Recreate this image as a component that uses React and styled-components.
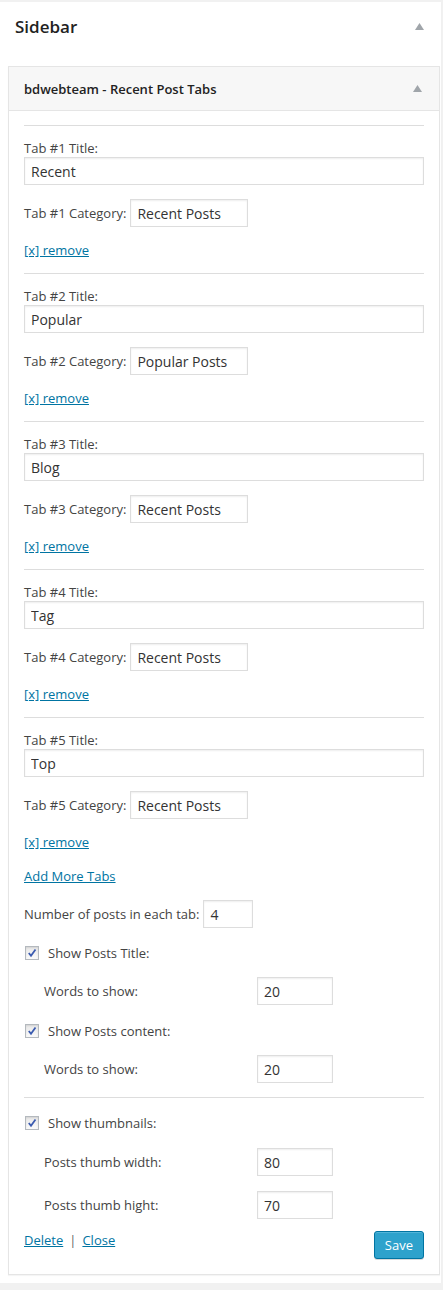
import React from 'react';
import styled, { createGlobalStyle } from 'styled-components';

const GlobalStyle = createGlobalStyle`
  html, body {
    margin: 0;
    padding: 0;
    background: #f1f1f1;
  }
  body {
    font-family: 'Open Sans', 'Noto Sans', sans-serif;
    font-size: 13px;
    color: #444;
  }
`;

const tabs = [
  { title: 'Recent', category: 'Recent Posts' },
  { title: 'Popular', category: 'Popular Posts' },
  { title: 'Blog', category: 'Recent Posts' },
  { title: 'Tag', category: 'Recent Posts' },
  { title: 'Top', category: 'Recent Posts' },
];

const Arrow = () => (
  <svg width="9" height="7" viewBox="0 0 9 7">
    <path d="M4.5 0 L9 7 L0 7 Z" fill="#a0a5aa" />
  </svg>
);

const CheckIcon = () => (
  <svg width="10" height="10" viewBox="0 0 10 10">
    <path d="M1.8 5 L4 7.8 L8.5 1.5" stroke="#3b5bb0" strokeWidth="1.8" fill="none" />
  </svg>
);

const App = () => {
  return (
    <>
      <GlobalStyle />
      <Panel>
        <PanelHeader>
          <PanelTitle>Sidebar</PanelTitle>
          <Arrow />
        </PanelHeader>
        <Widget>
          <WidgetHeader>
            <WidgetTitle>bdwebteam - Recent Post Tabs</WidgetTitle>
            <Arrow />
          </WidgetHeader>
          <WidgetBody>
            {tabs.map((tab, index) => (
              <TabSection key={index}>
                <Divider />
                <Label>Tab #{index + 1} Title:</Label>
                <TextInput $width="100%" defaultValue={tab.title} />
                <InlineRow>
                  <span>Tab #{index + 1} Category:</span>
                  <TextInput $width="118px" defaultValue={tab.category} />
                </InlineRow>
                <RemoveLink href="#">[x] remove</RemoveLink>
              </TabSection>
            ))}
            <AddLink href="#">Add More Tabs</AddLink>
            <InlineRow $top="15px">
              <span>Number of posts in each tab:</span>
              <TextInput $width="50px" defaultValue="4" />
            </InlineRow>
            <CheckRow $top="16px">
              <CheckBox><CheckIcon /></CheckBox>
              <span>Show Posts Title:</span>
            </CheckRow>
            <IndentRow>
              <span>Words to show:</span>
              <TextInput $width="76px" defaultValue="20" />
            </IndentRow>
            <CheckRow $top="17px">
              <CheckBox><CheckIcon /></CheckBox>
              <span>Show Posts content:</span>
            </CheckRow>
            <IndentRow>
              <span>Words to show:</span>
              <TextInput $width="76px" defaultValue="20" />
            </IndentRow>
            <Divider $top="14px" />
            <CheckRow $top="16px">
              <CheckBox><CheckIcon /></CheckBox>
              <span>Show thumbnails:</span>
            </CheckRow>
            <IndentRow $top="16px">
              <span>Posts thumb width:</span>
              <TextInput $width="76px" defaultValue="80" />
            </IndentRow>
            <IndentRow>
              <span>Posts thumb hight:</span>
              <TextInput $width="76px" defaultValue="70" />
            </IndentRow>
            <Footer>
              <FooterLinks>
                <TextLink href="#">Delete</TextLink>
                <Separator>|</Separator>
                <TextLink href="#">Close</TextLink>
              </FooterLinks>
              <SaveButton>Save</SaveButton>
            </Footer>
          </WidgetBody>
        </Widget>
      </Panel>
    </>
  );
};

const Panel = styled.div`
  width: 441px;
  margin-top: 2px;
  background: #fff;
  box-shadow: 0 1px 1px rgba(0, 0, 0, 0.04);
  padding: 0 1px 8px 8px;
  box-sizing: border-box;
`;

const PanelHeader = styled.div`
  height: 52px;
  display: flex;
  align-items: center;
  justify-content: space-between;
  padding: 0 16px 4px 7px;
  box-sizing: border-box;
`;

const PanelTitle = styled.h3`
  margin: 0;
  font-size: 17px;
  font-weight: 600;
  color: #222;
`;

const Widget = styled.div`
  margin-top: 12px;
  border: 1px solid #e5e5e5;
  background: #fff;
  box-shadow: 0 1px 1px rgba(0, 0, 0, 0.04);
`;

const WidgetHeader = styled.div`
  height: 43px;
  background: #f7f7f7;
  border-bottom: 1px solid #e5e5e5;
  display: flex;
  align-items: center;
  justify-content: space-between;
  padding: 0 17px 0 15px;
`;

const WidgetTitle = styled.h4`
  margin: 0;
  font-size: 13px;
  font-weight: 600;
  color: #222;
`;

const WidgetBody = styled.div`
  padding: 14px 15px 15px;
  display: flex;
  flex-direction: column;
`;

const TabSection = styled.div`
  display: flex;
  flex-direction: column;
  padding-bottom: 14px;
`;

const Divider = styled.div`
  height: 0;
  border-top: 1px solid #ddd;
  margin-top: ${({ $top }) => $top || '0'};
`;

const Label = styled.label`
  margin-top: 13px;
  line-height: 18px;
`;

const TextInput = styled.input`
  box-sizing: border-box;
  width: ${({ $width }) => $width};
  height: 28px;
  border: 1px solid #ddd;
  box-shadow: inset 0 1px 2px rgba(0, 0, 0, 0.07);
  background: #fff;
  color: #333;
  font-family: 'Open Sans', 'Noto Sans', sans-serif;
  font-size: 14px;
  padding: 0 6px;
  margin: 0;
  outline: none;
`;

const InlineRow = styled.div`
  margin-top: ${({ $top }) => $top || '14px'};
  display: flex;
  align-items: center;
  gap: 4px;
`;

const TextLink = styled.a`
  color: #0074a2;
  text-decoration: underline;
  line-height: 18px;
`;

const RemoveLink = styled(TextLink)`
  margin-top: 14px;
  align-self: flex-start;
`;

const AddLink = styled(TextLink)`
  margin-top: 2px;
  align-self: flex-start;
`;

const CheckRow = styled.div`
  margin-top: ${({ $top }) => $top};
  display: flex;
  align-items: center;
  gap: 9px;
  height: 18px;
  padding-left: 1px;
`;

const CheckBox = styled.span`
  box-sizing: border-box;
  width: 14px;
  height: 14px;
  border: 1px solid #b4b9be;
  background: linear-gradient(#e9e9e9, #fafafa);
  box-shadow: inset 0 1px 2px rgba(0, 0, 0, 0.1);
  display: flex;
  align-items: center;
  justify-content: center;
`;

const IndentRow = styled.div`
  margin-top: ${({ $top }) => $top || '15px'};
  padding-left: 20px;
  display: grid;
  grid-template-columns: 213px 76px;
  align-items: center;
`;

const Footer = styled.div`
  margin-top: 12px;
  display: flex;
  justify-content: space-between;
  align-items: flex-start;
`;

const FooterLinks = styled.div`
  display: flex;
  align-items: center;
  gap: 6px;
  line-height: 18px;
`;

const Separator = styled.span`
  color: #666;
`;

const SaveButton = styled.button`
  height: 28px;
  padding: 0 10px 1px;
  background: #2ea2cc;
  border: 1px solid #0074a2;
  border-radius: 3px;
  box-shadow: inset 0 1px 0 rgba(120, 200, 230, 0.5), 0 1px 0 rgba(0, 0, 0, 0.15);
  color: #fff;
  font-family: 'Open Sans', 'Noto Sans', sans-serif;
  font-size: 13px;
`;

export default App;
